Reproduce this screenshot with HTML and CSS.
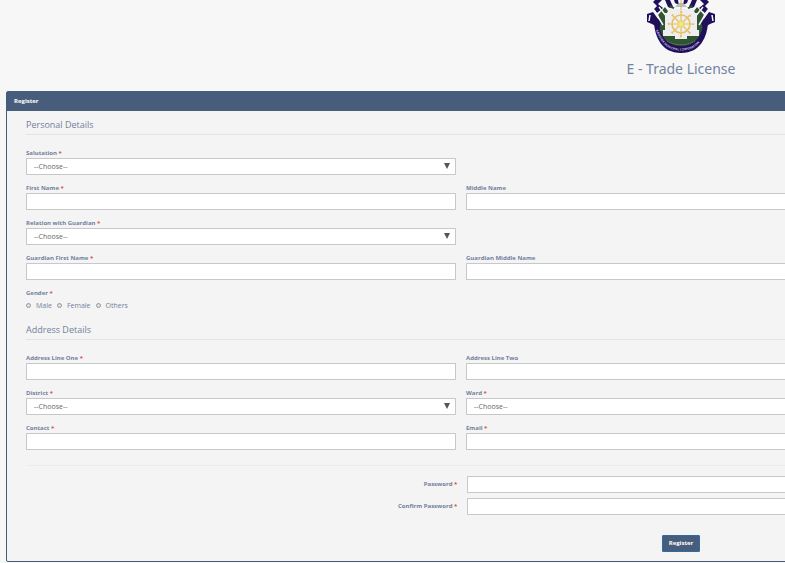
FILE: index.html
```
<!DOCTYPE html>
<html lang="en">
<head>
    <meta charset="UTF-8">
    <title>E - Trade License</title>
    <link rel="stylesheet" href="styles.css">
</head>
<body>
    <div class="page">
        <header class="site-header">
            <svg class="emblem" width="80" height="54" viewBox="0 0 80 54" role="img" aria-label="Municipal corporation emblem">
                <!-- shield bowl -->
                <path d="M13 23C14 36 20 53 40 53S66 36 67 23L60 17H20Z" fill="#20105c"/>
                <path d="M18 17C17 34 25 46 40 46S63 34 62 17Z" fill="#2f5530"/>
                <!-- ribbons -->
                <g fill="#20105c">
                    <path d="M14 0L21 0 17 4 22 8 16 13 13 9 16 6 12 2Z"/>
                    <path d="M6 14L12 12 20 23 18 28 11 24 6 22Z"/>
                    <path d="M66 0L59 0 63 4 58 8 64 13 67 9 64 6 68 2Z"/>
                    <path d="M74 14L68 12 60 23 62 28 69 24 74 22Z"/>
                    <path d="M24 0L29 0 33 9 27 7Z"/>
                    <path d="M56 0L51 0 47 9 53 7Z"/>
                    <path d="M33 0L37 0 38 5 34 3Z"/>
                    <path d="M47 0L43 0 42 5 46 3Z"/>
                </g>
                <path d="M17 15L24 7 27 11 21 22Z M63 15L56 7 53 11 59 22Z M29 5L34 8H28Z M51 5L46 8H52Z" fill="#2f5530"/>
                <g stroke="#f7f7f7" stroke-width="1.5" fill="none">
                    <path d="M13 10L22 25M18 7L26 17M23 4L29 12M67 10L58 25M62 7L54 17M57 4L51 12M9 15L8 21M71 15L72 21"/>
                </g>
                <!-- stepped plinth -->
                <path d="M27 9H53V13H56V30H58V36H46V39H34V36H22V30H24V13H27Z" fill="#eeedf0"/>
                <path d="M34 7L38 3H42L46 7Z" fill="#b9bdc4"/>
                <path d="M40 0V10" stroke="#d9b84b" stroke-width="1"/>
                <!-- wheel -->
                <g fill="none" stroke="#e8c060">
                    <circle cx="40" cy="24" r="9" stroke-width="1.6"/>
                    <path d="M40 11V37M27 24H53M31 15L49 33M49 15L31 33" stroke-width="1.1"/>
                    <circle cx="40" cy="24" r="12.3" stroke-width="1.8" stroke-dasharray="2 7.66" stroke-dashoffset="1"/>
                </g>
                <circle cx="40" cy="24" r="4" fill="#ead878"/>
                <circle cx="40" cy="24" r="2" fill="#f3ec78"/>
                <path d="M26 41C34 46 46 46 54 41" fill="none" stroke="#71906d" stroke-width="1" stroke-dasharray="1 1"/>
                <path id="motto" d="M15 30C20 44 27 50.500 40 50.500S60 44 65 30" fill="none"/>
                <text class="motto"><textPath href="#motto">GANGTOK MUNICIPAL CORPORATION</textPath></text>
            </svg>
            <h1>E - Trade License</h1>
        </header>

        <form class="panel">
            <h2 class="panel-heading">Register</h2>
            <div class="panel-body">
                <fieldset>
                    <legend>Personal Details</legend>
                    <div class="form-grid">
                        <div class="form-group first">
                            <label for="salutation">Salutation <span class="required">*</span></label>
                            <div class="select-box"><select id="salutation"><option>--Choose--</option></select></div>
                        </div>
                        <div class="form-group first">
                            <label for="first-name">First Name <span class="required">*</span></label>
                            <input type="text" id="first-name">
                        </div>
                        <div class="form-group">
                            <label for="middle-name">Middle Name</label>
                            <input type="text" id="middle-name">
                        </div>
                        <div class="form-group first">
                            <label for="relation">Relation with Guardian <span class="required">*</span></label>
                            <div class="select-box"><select id="relation"><option>--Choose--</option></select></div>
                        </div>
                        <div class="form-group first">
                            <label for="guardian-first">Guardian First Name <span class="required">*</span></label>
                            <input type="text" id="guardian-first">
                        </div>
                        <div class="form-group">
                            <label for="guardian-middle">Guardian Middle Name</label>
                            <input type="text" id="guardian-middle">
                        </div>
                        <div class="form-group first" role="radiogroup" aria-labelledby="gender-label">
                            <span class="label" id="gender-label">Gender <span class="required">*</span></span>
                            <div class="radios">
                                <label><input type="radio" name="gender">Male</label>
                                <label><input type="radio" name="gender">Female</label>
                                <label><input type="radio" name="gender">Others</label>
                            </div>
                        </div>
                    </div>
                </fieldset>

                <fieldset>
                    <legend>Address Details</legend>
                    <div class="form-grid">
                        <div class="form-group first">
                            <label for="address-one">Address Line One <span class="required">*</span></label>
                            <input type="text" id="address-one">
                        </div>
                        <div class="form-group">
                            <label for="address-two">Address Line Two</label>
                            <input type="text" id="address-two">
                        </div>
                        <div class="form-group first">
                            <label for="district">District <span class="required">*</span></label>
                            <div class="select-box"><select id="district"><option>--Choose--</option></select></div>
                        </div>
                        <div class="form-group">
                            <label for="ward">Ward <span class="required">*</span></label>
                            <div class="select-box"><select id="ward"><option>--Choose--</option></select></div>
                        </div>
                        <div class="form-group first">
                            <label for="contact">Contact <span class="required">*</span></label>
                            <input type="text" id="contact">
                        </div>
                        <div class="form-group">
                            <label for="email">Email <span class="required">*</span></label>
                            <input type="email" id="email">
                        </div>
                    </div>
                </fieldset>

                <hr>
                <div class="passwords">
                    <label for="password">Password <span class="required">*</span></label>
                    <input type="password" id="password">
                    <label for="confirm">Confirm Password <span class="required">*</span></label>
                    <input type="password" id="confirm">
                </div>
                <button type="button" class="btn">Register</button>
            </div>
        </form>
    </div>
</body>
</html>
```
FILE: styles.css
```
* {
    box-sizing: border-box;
}
body {
    margin: 0;
    overflow: hidden;
    background-color: #f7f7f7;
    color: #73819c;
    font-family: "Open Sans", "Noto Sans", sans-serif;
    font-size: 7px;
    line-height: 9px;
}
/* desktop layout, three columns wide */
.page {
    min-width: 1362px;
    padding: 0 6px;
}
.site-header {
    display: flex;
    flex-direction: column;
    align-items: center;
    padding-bottom: 12px;
}
.emblem {
    display: block;
}
.motto {
    fill: #c5bfdd;
    font-size: 3px;
    font-weight: 700;
}
h1 {
    margin: 5px 0 0;
    font-family: "Noto Sans", sans-serif;
    font-size: 14px;
    font-weight: 400;
    line-height: 20px;
    color: #71839f;
}
.panel {
    border: 1px solid #485d7c;
    border-radius: 2px;
    background-color: #f4f4f4;
}
.panel-heading {
    margin: 0;
    padding: 5px 7px;
    background-color: #485d7c;
    color: #ffffff;
    font-size: 6px;
    line-height: 9px;
}
.panel-body {
    padding: 6px 19px 9px;
}
fieldset {
    margin: 0 0 12px;
    padding: 0;
    border: 0;
}
legend {
    width: 100%;
    margin-bottom: 14px;
    padding: 0 0 2px;
    border-bottom: 1px solid #e4e4e4;
    font-size: 9px;
    line-height: 15px;
}
hr {
    margin: 15px 0 10px;
    border: 0;
    border-top: 1px solid #ececec;
}
.form-grid {
    display: grid;
    grid-template-columns: repeat(3, 1fr);
    gap: 9px 10px;
}
.first {
    grid-column-start: 1;
}
label, .label {
    display: block;
    font-size: 6px;
    font-weight: 700;
}
.required {
    color: #d9534f;
}
input, select {
    display: block;
    width: 100%;
    height: 17px;
    margin: 0;
    padding: 0 7px;
    border: 1px solid #c8c8c8;
    border-radius: 0;
    background-color: #ffffff;
    color: #666666;
    font-family: inherit;
    font-size: 7px;
}
select {
    appearance: none;
}
.select-box {
    position: relative;
}
.select-box::after {
    content: "";
    position: absolute;
    top: 5px;
    right: 6px;
    border: 3px solid transparent;
    border-top: 6px solid #555555;
    border-bottom: 0;
    pointer-events: none;
}
.radios {
    display: flex;
    gap: 5px;
    padding-top: 3px;
}
.radios label {
    display: flex;
    align-items: center;
    gap: 5px;
    font-size: 7px;
    font-weight: 400;
}
.radios input {
    appearance: none;
    width: 5px;
    height: 5px;
    padding: 0;
    border: 1px solid #9a9a9a;
    border-radius: 50%;
    background-color: #e0e0e0;
}
.passwords {
    display: grid;
    grid-template-columns: repeat(3, 1fr);
    gap: 5px 10px;
    align-items: center;
    padding-left: 2px;
}
.passwords label {
    grid-column-start: 1;
    text-align: right;
}
.btn {
    display: block;
    margin: 20px auto 0;
    padding: 3px 6px;
    border: 1px solid #2e6da4;
    border-radius: 1px;
    background-color: #485d7c;
    color: #ffffff;
    font-family: inherit;
    font-size: 6px;
    font-weight: 700;
    line-height: 9px;
}
```
